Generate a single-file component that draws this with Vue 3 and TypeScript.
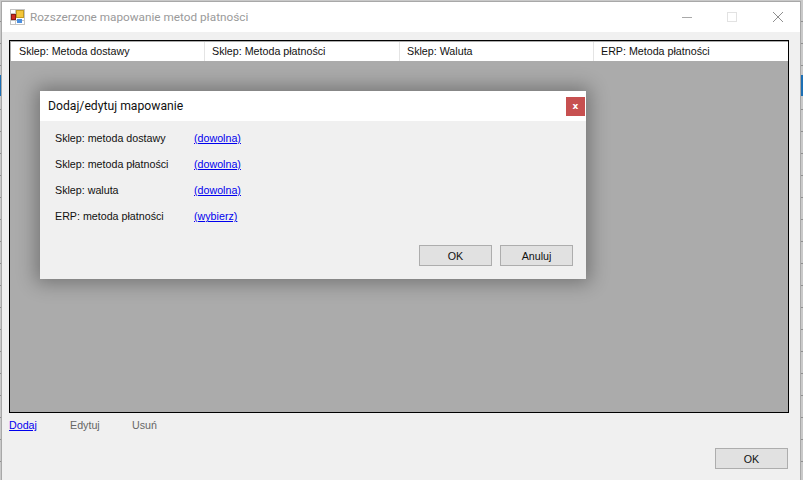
<script setup lang="ts">
const columns: string[] = ['Sklep: Metoda dostawy', 'Sklep: Metoda płatności', 'Sklep: Waluta', 'ERP: Metoda płatności']
const fields: { label: string; value: string }[] = [
  { label: 'Sklep: metoda dostawy', value: '(dowolna)' },
  { label: 'Sklep: metoda płatności', value: '(dowolna)' },
  { label: 'Sklep: waluta', value: '(dowolna)' },
  { label: 'ERP: metoda płatności', value: '(wybierz)' },
]
</script>

<template>
  <div class="desktop">
    <div class="window">
      <header class="titlebar">
        <svg class="app-icon" width="15" height="16" viewBox="0 0 15 16">
          <rect x="0.5" y="0.5" width="14" height="15" fill="#fff" stroke="#c4c4c4" />
          <path d="M5.5 0V16M0 4.5H6M0 11.5H15" stroke="#c4c4c4" fill="none" />
          <rect x="6.5" y="1.5" width="7" height="7" fill="#f4c63a" stroke="#c19a22" />
          <rect x="1.5" y="5.5" width="4" height="5" fill="#cf2a20" stroke="#8c1a12" />
          <rect x="7" y="10" width="5" height="4" fill="#4a8fe0" />
        </svg>
        <span class="title">Rozszerzone mapowanie metod płatności</span>
        <div class="controls">
          <svg width="12" height="12" viewBox="0 0 12 12"><path d="M1 6.5H11" stroke="#a9a9a9" fill="none" /></svg>
          <svg width="10" height="10" viewBox="0 0 10 10"><rect x="0.5" y="0.5" width="9" height="9" stroke="#e2e2e2" fill="none" /></svg>
          <svg class="close-glyph" width="12" height="12" viewBox="0 0 12 12"><path d="M1 1L11 11M11 1L1 11" stroke="#8f8f8f" fill="none" /></svg>
        </div>
      </header>

      <div class="content">
        <section class="list">
          <div class="list-head">
            <div v-for="c in columns" :key="c" class="col">{{ c }}</div>
          </div>
          <div class="dialog">
            <div class="dialog-head">
              <span>Dodaj/edytuj mapowanie</span>
              <button class="close" type="button">x</button>
            </div>
            <div class="dialog-body">
              <div class="fields">
                <template v-for="f in fields" :key="f.label">
                  <span>{{ f.label }}</span>
                  <a class="link">{{ f.value }}</a>
                </template>
              </div>
              <div class="dialog-actions">
                <button class="btn" type="button">OK</button>
                <button class="btn" type="button">Anuluj</button>
              </div>
            </div>
          </div>
        </section>

        <nav class="actions">
          <a class="link">Dodaj</a>
          <span class="disabled">Edytuj</span>
          <span class="disabled">Usuń</span>
        </nav>

        <div class="footer">
          <button class="btn" type="button">OK</button>
        </div>
      </div>
    </div>
  </div>
</template>

<style>
html, body { margin: 0; background: #c8c8c8; }
</style>

<style scoped>
.desktop {
  width: 803px;
  height: 480px;
  overflow: hidden;
  padding: 1px 2px 0 1px;
  box-sizing: border-box;
  background:
    linear-gradient(#1b6fb5, #1b6fb5) 0 75px / 100% 21px no-repeat,
    repeating-linear-gradient(#c9c9c9 0 21px, #8f8f8f 21px 22px);
  font-family: "Liberation Sans", Arial, sans-serif;
  font-size: 10.7px;
  color: #111;
}
.window {
  height: 479px;
  box-sizing: border-box;
  border-top: 1px solid #a8a8a8;
  border-left: 1px solid #a8a8a8;
  border-right: 1px solid #a8a8a8;
  background: #f0f0f0;
  display: flex;
  flex-direction: column;
}
.titlebar {
  height: 30px;
  flex: none;
  background: #fff;
  display: flex;
  align-items: center;
  padding-left: 8px;
}
.app-icon { flex: none; }
.title { margin-left: 5px; color: #9a9a9a; font-family: Roboto, sans-serif; font-size: 11.75px; }
.controls {
  margin-left: auto;
  padding-right: 16px;
  display: flex;
  gap: 34px;
  align-items: center;
}
.close-glyph { margin-left: 1px; }
.content { flex: 1; display: flex; flex-direction: column; padding: 8px 11px 0 7px; }
.list {
  position: relative;
  height: 373px;
  box-sizing: border-box;
  border: 1px solid #000;
  background: #ababab;
  flex: none;
}
.list-head {
  display: grid;
  grid-template-columns: 194px 195px 194px 1fr;
  height: 19px;
  margin: 1px 0 0 1px;
  background: #fff;
}
.col {
  padding-left: 7px;
  line-height: 19px;
  border-right: 1px solid #e4e4e4;
  white-space: nowrap;
}
.col:first-child { padding-left: 8px; }
.col:last-child { border-right: 0; }
.dialog {
  position: absolute;
  left: 30px;
  top: 50px;
  width: 546px;
  height: 188px;
  background: #f0f0f0;
  box-shadow: 0 0 18px 4px rgba(0, 0, 0, 0.32);
  display: flex;
  flex-direction: column;
}
.dialog-head {
  height: 30px;
  flex: none;
  background: #fff;
  display: flex;
  align-items: center;
  justify-content: space-between;
  padding: 0 1px 0 8px;
  font-family: Roboto, sans-serif;
  font-size: 12.2px;
}
.close {
  width: 19px;
  height: 19px;
  padding: 0;
  border: 0;
  background: #c75050;
  color: #fff;
  font-family: "DejaVu Sans", sans-serif;
  font-weight: 700;
  font-size: 9px;
  line-height: 19px;
}
.dialog-body { flex: 1; display: flex; flex-direction: column; padding: 3.4px 13px 13px 15px; }
.fields {
  display: grid;
  grid-template-columns: 139px 1fr;
  grid-auto-rows: 26.3px;
  align-items: center;
}
.link { color: #0000ee; text-decoration: underline; justify-self: start; }
.dialog-actions { margin-top: auto; display: flex; justify-content: flex-end; gap: 8px; }
.btn {
  width: 73px;
  height: 21px;
  padding: 0;
  box-sizing: border-box;
  border: 1px solid #adadad;
  background: #e1e1e1;
  color: #111;
  font: inherit;
}
.actions {
  display: grid;
  grid-template-columns: 61px 62px auto;
  justify-content: start;
  padding-top: 4px;
  line-height: 16px;
}
.disabled { color: #666; }
.footer { margin-top: auto; padding: 0 1px 11px 0; display: flex; justify-content: flex-end; }
</style>
